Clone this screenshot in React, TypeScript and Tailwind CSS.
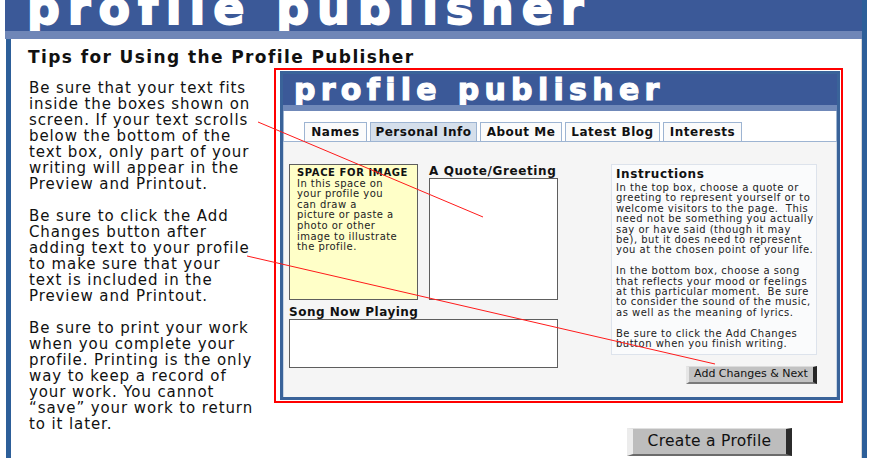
import React from 'react';

const tips: string[][] = [
  [
    'Be sure that your text fits',
    'inside the boxes shown on',
    'screen. If your text scrolls',
    'below the bottom of the',
    'text box, only part of your',
    'writing will appear in the',
    'Preview and Printout.',
  ],
  [
    'Be sure to click the Add',
    'Changes button after',
    'adding text to your profile',
    'to make sure that your',
    'text is included in the',
    'Preview and Printout.',
  ],
  [
    'Be sure to print your work',
    'when you complete your',
    'profile. Printing is the only',
    'way to keep a record of',
    'your work. You cannot',
    '\u201Csave\u201D your work to return',
    'to it later.',
  ],
];

const imageNote = [
  'In this space on',
  'your profile you',
  'can draw a',
  'picture or paste a',
  'photo or other',
  'image to illustrate',
  'the profile.',
];

const instructions: string[][] = [
  [
    'In the top box, choose a quote or',
    'greeting to represent yourself or to',
    'welcome visitors to the page.  This',
    'need not be something you actually',
    'say or have said (though it may',
    'be), but it does need to represent',
    'you at the chosen point of your life.',
  ],
  [
    'In the bottom box, choose a song',
    'that reflects your mood or feelings',
    'at this particular moment.  Be sure',
    'to consider the sound of the music,',
    'as well as the meaning of lyrics.',
  ],
  ['Be sure to click the Add Changes', 'button when you finish writing.'],
];

const tabs = [
  { label: 'Names', width: 'w-[63px]', active: false },
  { label: 'Personal Info', width: 'w-[107px]', active: true },
  { label: 'About Me', width: 'w-[82px]', active: false },
  { label: 'Latest Blog', width: 'w-[95px]', active: false },
  { label: 'Interests', width: 'w-[79px]', active: false },
];

function Lines({ lines }: { lines: string[] }) {
  return (
    <>
      {lines.map((line, i) => (
        <span key={i} className="block whitespace-pre">
          {line}
        </span>
      ))}
    </>
  );
}

function PublisherPreview() {
  return (
    <div className="flex h-[335px] flex-col border-2 border-[#ff0000] pb-[1px] pl-[4px] pr-[1px] pt-[1px]">
      <div className="flex flex-1 flex-col border-[3px] border-[#3a6399]">
        {/* banner */}
        <div className="flex h-[31px] shrink-0 items-end overflow-hidden bg-[#3b5998] pl-[11px]">
          <span className="whitespace-nowrap text-[30px] font-bold leading-none tracking-[5.3px] text-white [-webkit-text-stroke:1.2px_white]">
            profile publisher
          </span>
        </div>
        <div className="h-[6px] shrink-0 bg-[#7089b9]" />

        {/* tabs */}
        <div className="flex h-[31px] shrink-0 items-end gap-[3px] border-x border-b border-[#9db4d2] bg-white pl-[20px]">
          {tabs.map((tab) => (
            <div
              key={tab.label}
              className={`flex h-[19px] items-center justify-center border border-b-0 border-[#9db4d2] text-[12px] font-bold tracking-[0.5px] text-[#111] ${tab.width} ${
                tab.active ? 'bg-[#d5dfeb]' : 'bg-[#fbfbfb]'
              }`}
            >
              {tab.label}
            </div>
          ))}
        </div>

        {/* form */}
        <div className="flex flex-1 border-x border-[#c9d5e4] bg-[#f5f5f5] pl-[5px] pt-[22px]">
          <div className="flex w-[269px] flex-col">
            <div className="flex gap-[11px]">
              <div className="h-[136px] w-[129px] border-[1.5px] border-[#5e5e5e] bg-[#ffffc8] px-[7px] pt-[3px] text-[10px] leading-[10.6px] text-[#222]">
                <div className="font-bold tracking-[0.6px] text-[#111]">SPACE FOR IMAGE</div>
                <div className="tracking-[0.45px]">
                  <Lines lines={imageNote} />
                </div>
              </div>
              <div className="flex w-[129px] flex-col">
                <div className="whitespace-nowrap text-[12px] font-bold leading-[14px] tracking-[0.6px] text-[#111]">
                  A Quote/Greeting
                </div>
                <div className="h-[122px] border-[1.5px] border-[#5e5e5e] bg-white" />
              </div>
            </div>
            <div className="mt-[5px] text-[12px] font-bold leading-[14px] tracking-[0.5px] text-[#111]">
              Song Now Playing
            </div>
            <div className="h-[49px] border-[1.5px] border-[#5e5e5e] bg-white" />
          </div>

          <div className="ml-[53px] flex flex-col items-end">
            <div className="h-[191px] w-[206px] border border-[#dde3ec] bg-[#fafbfc] px-[4px] pt-[2px]">
              <div className="text-[12px] font-bold leading-[14px] tracking-[0.6px] text-[#111]">Instructions</div>
              <div className="mt-[2px] flex flex-col gap-[10.4px] text-[10px] leading-[10.4px] tracking-[0.5px] text-[#222]">
                {instructions.map((para, i) => (
                  <div key={i}>
                    <Lines lines={para} />
                  </div>
                ))}
              </div>
            </div>
            <button className="mt-[11px] flex h-[18px] w-[131px] items-center justify-center border-b-2 border-l-[3px] border-r-[4px] border-t border-b-[#7a7a7a] border-l-[#e6e6e6] border-r-[#262626] border-t-[#dcdcdc] bg-[#c2c2c2] text-[11px] text-[#111]">
              Add Changes &amp; Next
            </button>
          </div>
        </div>
      </div>
    </div>
  );
}

export default function App() {
  return (
    <div className="relative flex h-[458px] w-[872px] overflow-hidden bg-white font-['DejaVu_Sans',sans-serif] text-black">
      <div className="w-[5px] shrink-0" />
      <div className="flex min-w-0 flex-1 flex-col">
        {/* page banner, cropped at the top */}
        <div className="flex h-[31px] shrink-0 items-end overflow-hidden bg-[#3b5998] pl-[22px]">
          <span className="whitespace-nowrap text-[46px] font-bold leading-none tracking-[7.9px] text-white [-webkit-text-stroke:1.8px_white]">
            profile publisher
          </span>
        </div>
        <div className="h-[8px] shrink-0 bg-[#6f86b7]" />

        <div className="flex flex-1">
          <div className="ml-[1px] w-[5px] shrink-0 bg-[#2d5f99]" />
          <div className="flex flex-1 flex-col border-r border-[#d8d8d8] pl-[17px] pt-[8px]">
            <h1 className="whitespace-nowrap text-[17px] font-bold leading-[20px] tracking-[1.4px] text-[#111]">
              Tips for Using the Profile Publisher
            </h1>
            <div className="mt-[1px] flex">
              <div className="flex w-[246px] shrink-0 flex-col gap-[16px] pl-[1px] pt-[12px] text-[15px] leading-[16px] tracking-[0.9px] text-[#111]">
                {tips.map((para, i) => (
                  <p key={i}>
                    <Lines lines={para} />
                  </p>
                ))}
              </div>
              <div className="flex w-[569px] shrink-0 flex-col">
                <PublisherPreview />
                <div className="mt-[25px] flex justify-end pr-[51px]">
                  <button className="flex h-[28px] w-[165px] items-center justify-center border-b-2 border-l-[6px] border-r-[6px] border-t border-b-[#6b6b6b] border-l-[#ececec] border-r-[#2b2b2b] border-t-[#e0e0e0] bg-[#bdbdbd] text-[15.5px] tracking-[0.3px] text-[#111]">
                    Create a Profile
                  </button>
                </div>
              </div>
            </div>
          </div>
        </div>
      </div>
      <div className="w-[5px] shrink-0 bg-[#2d5f99]" />
      <div className="w-[5px] shrink-0" />

      {/* annotation lines */}
      <svg className="pointer-events-none absolute left-0 top-0" width="872" height="458">
        <line x1="258" y1="122" x2="483" y2="217" stroke="#ff1a1a" strokeWidth="1" />
        <line x1="247" y1="256" x2="715" y2="364" stroke="#ff1a1a" strokeWidth="1" />
      </svg>
    </div>
  );
}
